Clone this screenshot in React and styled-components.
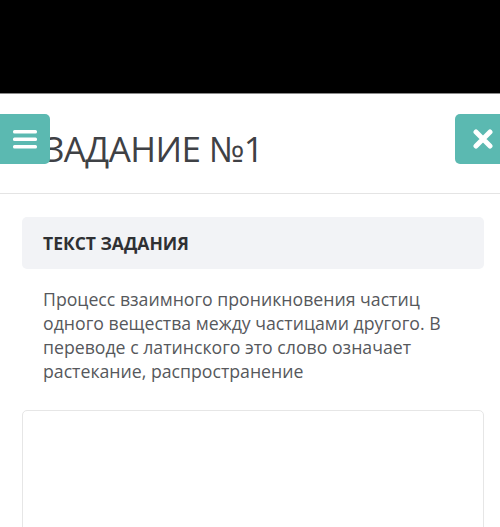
import React from "react";
import styled, { createGlobalStyle } from "styled-components";

const Global = createGlobalStyle`
  html, body { margin: 0; padding: 0; background: #fff; overflow: hidden; }
  body { font-family: "Open Sans", "Noto Sans", sans-serif; width: 500px; height: 527px; }
`;

const Page = styled.div`
  width: 500px;
  height: 527px;
  display: flex;
  flex-direction: column;
  overflow: hidden;
  & > * { flex-shrink: 0; }
`;

const TopBar = styled.div`
  height: 93px;
  background: #000;
  border-bottom: 1px solid #8a8a8a;
`;

const Header = styled.div`
  position: relative;
  height: 100px;
  display: flex;
  align-items: flex-start;
  justify-content: space-between;
  border-bottom: 1px solid #e4e4e4;
  padding: 20px 0 0 44px;
  box-sizing: border-box;
`;

const Title = styled.h1`
  margin: 11px 0 0;
  font-weight: 400;
  font-size: 35px;
  letter-spacing: -0.6px;
  color: #3f4145;
`;

const MenuButton = styled.button`
  position: absolute;
  left: -6px;
  top: 20px;
  width: 56px;
  height: 50px;
  border: none;
  border-radius: 5px;
  background: #5bb9b1;
  display: flex;
  align-items: center;
  justify-content: center;
  padding: 0 0 0 6px;
`;

const CloseButton = styled.button`
  width: 55px;
  height: 50px;
  margin-right: -10px;
  border: none;
  border-radius: 5px;
  background: #5bb9b1;
  display: flex;
  align-items: center;
  justify-content: center;
  padding: 0;
`;

const Content = styled.div`
  padding: 23px 16px 0 22px;
  display: flex;
  flex-direction: column;
`;

const TaskHead = styled.div`
  background: #f2f3f6;
  border-radius: 5px;
  height: 52px;
  display: flex;
  align-items: center;
  padding-left: 21px;
`;

const TaskHeadText = styled.h2`
  margin: 0;
  font-size: 17.5px;
  font-weight: 700;
  color: #2f3033;
`;

const TaskText = styled.p`
  margin: 18px 0 0 21px;
  font-size: 17.7px;
  line-height: 24px;
  color: #56585c;
  max-width: 420px;
`;

const AnswerBox = styled.div`
  margin-top: 27px;
  height: 140px;
  border: 1.5px solid #e6e6e6;
  border-radius: 5px;
  background: #fff;
`;

const Hamburger = () => (
  <svg width="24" height="20" viewBox="0 0 24 20">
    <rect x="0" y="1" width="24" height="3.5" rx="1.5" fill="#fff" />
    <rect x="0" y="8.5" width="24" height="3.5" rx="1.5" fill="#fff" />
    <rect x="0" y="16" width="24" height="3.5" rx="1.5" fill="#fff" />
  </svg>
);

const Cross = () => (
  <svg width="20" height="20" viewBox="0 0 20 20">
    <path d="M3 3 L17 17 M17 3 L3 17" stroke="#fff" strokeWidth="5" strokeLinecap="round" />
  </svg>
);

export default function App() {
  return (
    <Page>
      <Global />
      <TopBar />
      <Header>
        <MenuButton aria-label="menu"><Hamburger /></MenuButton>
        <Title>ЗАДАНИЕ №1</Title>
        <CloseButton aria-label="close"><Cross /></CloseButton>
      </Header>
      <Content>
        <TaskHead>
          <TaskHeadText>ТЕКСТ ЗАДАНИЯ</TaskHeadText>
        </TaskHead>
        <TaskText>
          Процесс взаимного проникновения частиц одного вещества между частицами другого. В переводе с латинского это слово означает растекание, распространение
        </TaskText>
        <AnswerBox />
      </Content>
    </Page>
  );
}
